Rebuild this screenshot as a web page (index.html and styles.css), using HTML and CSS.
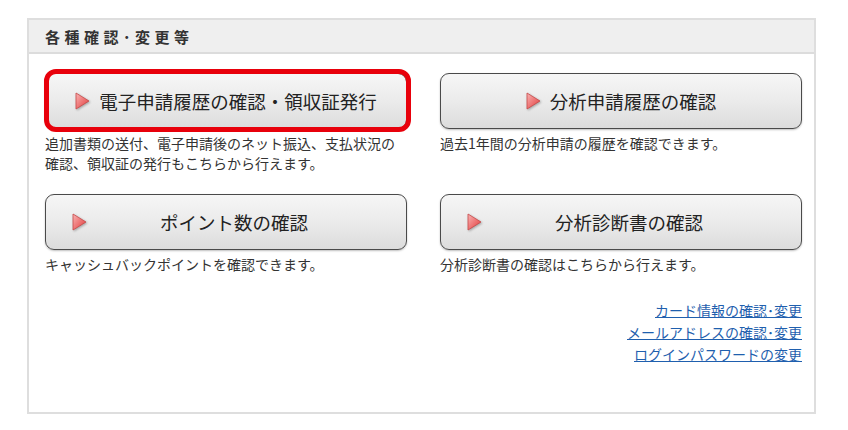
FILE: index.html
```html
<!DOCTYPE html>
<html lang="ja">

<head>
    <meta charset="UTF-8">
    <meta name="viewport" content="width=device-width, initial-scale=1.0">
    <title>各種確認・変更等</title>
    <link rel="stylesheet" href="styles.css">
</head>

<body>
    <svg width="0" height="0" class="defs">
        <defs>
            <linearGradient id="triFill" x1="0" y1="0" x2="1" y2="1">
                <stop offset="0" stop-color="#f8b4b4" />
                <stop offset="0.6" stop-color="#ec6a6a" />
                <stop offset="1" stop-color="#d23a3a" />
            </linearGradient>
        </defs>
    </svg>
    <div class="panel">
        <div class="panel-head">各種確認･変更等</div>
        <div class="panel-body">
            <div class="menu-grid">
                <div class="menu-item">
                    <a class="btn btn-marked" href="#">
                        <svg class="tri" viewBox="0 0 16 18"><path d="M1 1 L14 9 L1 17 Z" fill="url(#triFill)" stroke="#c84848" stroke-width="0.8" /></svg>
                        <span class="btn-text">電子申請履歴の確認・領収証発行</span>
                    </a>
                    <p class="desc">追加書類の送付、電子申請後のネット振込、支払状況の確認、領収証の発行もこちらから行えます。</p>
                </div>
                <div class="menu-item">
                    <a class="btn" href="#">
                        <svg class="tri" viewBox="0 0 16 18"><path d="M1 1 L14 9 L1 17 Z" fill="url(#triFill)" stroke="#c84848" stroke-width="0.8" /></svg>
                        <span class="btn-text">分析申請履歴の確認</span>
                    </a>
                    <p class="desc">過去1年間の分析申請の履歴を確認できます。</p>
                </div>
                <div class="menu-item">
                    <a class="btn btn-left" href="#">
                        <svg class="tri" viewBox="0 0 16 18"><path d="M1 1 L14 9 L1 17 Z" fill="url(#triFill)" stroke="#c84848" stroke-width="0.8" /></svg>
                        <span class="btn-text">ポイント数の確認</span>
                    </a>
                    <p class="desc">キャッシュバックポイントを確認できます。</p>
                </div>
                <div class="menu-item">
                    <a class="btn btn-left" href="#">
                        <svg class="tri" viewBox="0 0 16 18"><path d="M1 1 L14 9 L1 17 Z" fill="url(#triFill)" stroke="#c84848" stroke-width="0.8" /></svg>
                        <span class="btn-text">分析診断書の確認</span>
                    </a>
                    <p class="desc">分析診断書の確認はこちらから行えます。</p>
                </div>
            </div>
            <ul class="link-list">
                <li><a href="#">カード情報の確認･変更</a></li>
                <li><a href="#">メールアドレスの確認･変更</a></li>
                <li><a href="#">ログインパスワードの変更</a></li>
            </ul>
        </div>
    </div>
</body>

</html>
```

FILE: styles.css
```css
body {
    margin: 0;
    background: #fff;
    color: #222;
    font-family: "Noto Sans CJK JP", "Noto Sans", sans-serif;
}

.defs {
    position: absolute;
}

.panel {
    margin: 18px 0 0 27px;
    width: 785px;
    height: 392px;
    border: 2px solid #dedede;
}

.panel-head {
    height: 32px;
    line-height: 33px;
    padding-left: 16px;
    background: #efefef;
    border-bottom: 2px solid #dcdcdc;
    font-size: 15px;
    font-weight: bold;
    letter-spacing: 4.5px;
    color: #333;
}

.panel-body {
    padding: 19px 13px 0 16px;
}

.menu-grid {
    display: grid;
    grid-template-columns: 362px 362px;
    column-gap: 33px;
    row-gap: 21px;
}

.btn {
    position: relative;
    box-sizing: border-box;
    height: 56px;
    display: flex;
    align-items: center;
    justify-content: center;
    gap: 8px;
    border: 1.5px solid #4a4a4a;
    border-radius: 9px;
    background: linear-gradient(#f6f6f6, #ebebeb 50%, #dcdcdc);
    box-shadow: 0 1px 2px rgba(0, 0, 0, 0.25);
    color: #222;
    font-size: 18.5px;
    text-decoration: none;
}

.btn-marked::after {
    content: "";
    position: absolute;
    top: -5px;
    bottom: -4px;
    left: -2px;
    right: -5px;
    border: 5px solid #e8000b;
    border-radius: 12px;
}

.btn-left {
    justify-content: flex-start;
    padding: 0 26px 0 26px;
    gap: 0;
}

.btn-left .btn-text {
    flex: 1;
    text-align: center;
}

.tri {
    width: 16px;
    height: 18px;
    flex-shrink: 0;
    filter: drop-shadow(1px 1px 1px rgba(0, 0, 0, 0.3));
}

.desc {
    margin: 4px 0 0;
    font-size: 14px;
    line-height: 20px;
    color: #333;
}

.link-list {
    list-style: none;
    margin: 25px 0 0;
    padding: 0;
    width: 757px;
    text-align: right;
    font-size: 14px;
    line-height: 22px;
}

.link-list a {
    color: #1f5fae;
}
```
